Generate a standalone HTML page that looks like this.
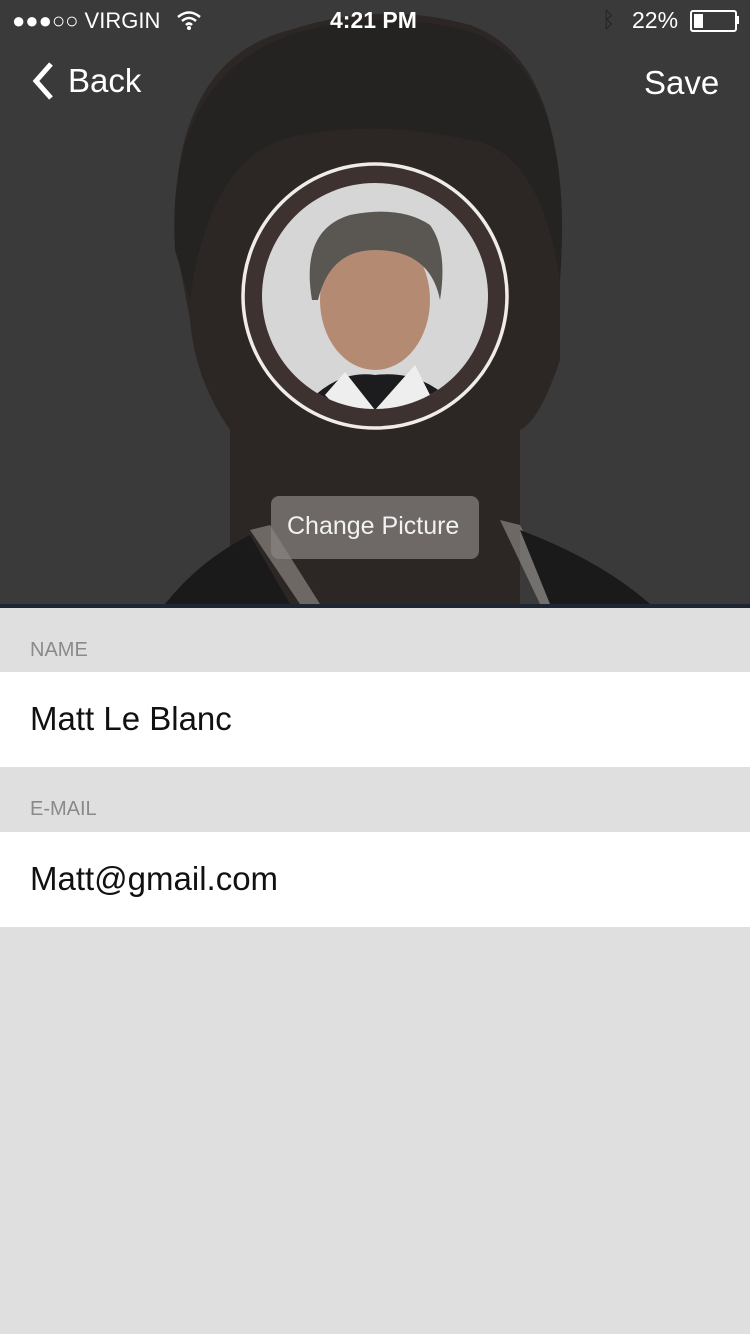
<!DOCTYPE html>
<html><head><meta charset="utf-8"><style>
body{margin:0;width:750px;height:1334px;background:#dfdfdf;font-family:"Liberation Sans",sans-serif;overflow:hidden;position:relative}
.t{position:absolute;color:#fff;white-space:nowrap}
.lab{position:absolute;left:30px;color:#8a8a8a;font-size:20px}
.row{position:absolute;left:0;width:750px;height:95px;background:#fff}
.row span{position:absolute;left:30px;top:28px;font-size:33px;color:#111}
</style></head><body>
<svg width="750" height="608" style="position:absolute;left:0;top:0">
<rect width="750" height="604" fill="#3a3a3a"/>
<path d="M175 240 Q170 60 290 30 Q380 0 470 25 Q570 60 560 260 L560 360 Q540 420 520 430 L520 604 L230 604 L230 430 Q195 380 190 320 Z" fill="#2c2725"/>
<path d="M175 250 Q165 80 290 35 Q390 5 480 35 Q575 80 560 280 Q540 150 470 140 Q380 120 300 135 Q210 150 190 300 Z" fill="#242322"/>
<path d="M250 530 L300 604 L320 604 L270 525 Z M500 520 L540 604 L560 604 L520 525 Z" fill="#9a9490" opacity="0.6"/>
<path d="M165 604 Q200 560 250 535 L290 604 Z M520 530 Q600 560 650 604 L550 604 Z" fill="#1a1a1a"/>
<rect y="604" width="750" height="4" fill="#1f2633"/>
<circle cx="375" cy="296" r="132" fill="#3d3230" stroke="#f0ece8" stroke-width="3.5"/>
<circle cx="375" cy="296" r="113" fill="#d6d6d6"/>
<clipPath id="c"><circle cx="375" cy="296" r="113"/></clipPath>
<g clip-path="url(#c)">
<path d="M310 400 Q340 370 375 375 Q420 370 450 400 L460 420 L300 420 Z" fill="#1c1c1e"/>
<path d="M345 372 L375 410 L415 365 L430 395 L400 420 L350 420 L325 395 Z" fill="#eee"/>
<ellipse cx="375" cy="300" rx="55" ry="70" fill="#b58a73"/>
<path d="M312 300 Q300 230 350 215 Q400 205 430 225 Q448 250 440 300 Q430 250 375 250 Q330 250 318 300 Z" fill="#5a5652"/>
</g>
<rect x="271" y="496" width="208" height="63" rx="8" fill="#8a8482" opacity="0.7"/>
</svg>
<div class="t" style="left:12px;top:8px;font-size:22px">●●●○○ VIRGIN</div>
<svg style="position:absolute;left:176px;top:10px" width="26" height="20"><path d="M2 7 Q13 -2 24 7 M6 11 Q13 5 20 11 M10 15 Q13 12 16 15" stroke="#fff" stroke-width="2.5" fill="none"/><circle cx="13" cy="18" r="2" fill="#fff"/></svg>
<div class="t" style="left:330px;top:7px;font-size:23px;font-weight:bold">4:21 PM</div>
<div class="t" style="left:602px;top:7px;font-size:22px;color:#222">ᛒ</div>
<div class="t" style="left:632px;top:7px;font-size:23px">22%</div>
<div style="position:absolute;left:690px;top:10px;width:43px;height:18px;border:2px solid #fff;border-radius:3px"><div style="margin:2px;width:9px;height:14px;background:#fff"></div></div>
<div style="position:absolute;left:736px;top:16px;width:3px;height:8px;background:#fff"></div>
<svg style="position:absolute;left:30px;top:60px" width="26" height="42"><path d="M21 4 L6 21 L21 38" stroke="#fff" stroke-width="5" fill="none"/></svg>
<div class="t" style="left:68px;top:62px;font-size:33px">Back</div>
<div class="t" style="left:644px;top:64px;font-size:33px">Save</div>
<div class="t" style="left:287px;top:512px;font-size:25px;color:#f2f2f2">Change Picture</div>
<div class="lab" style="top:639px">NAME</div>
<div class="row" style="top:672px"><span>Matt Le Blanc</span></div>
<div class="lab" style="top:798px">E-MAIL</div>
<div class="row" style="top:832px"><span>Matt@gmail.com</span></div>
</body></html>
